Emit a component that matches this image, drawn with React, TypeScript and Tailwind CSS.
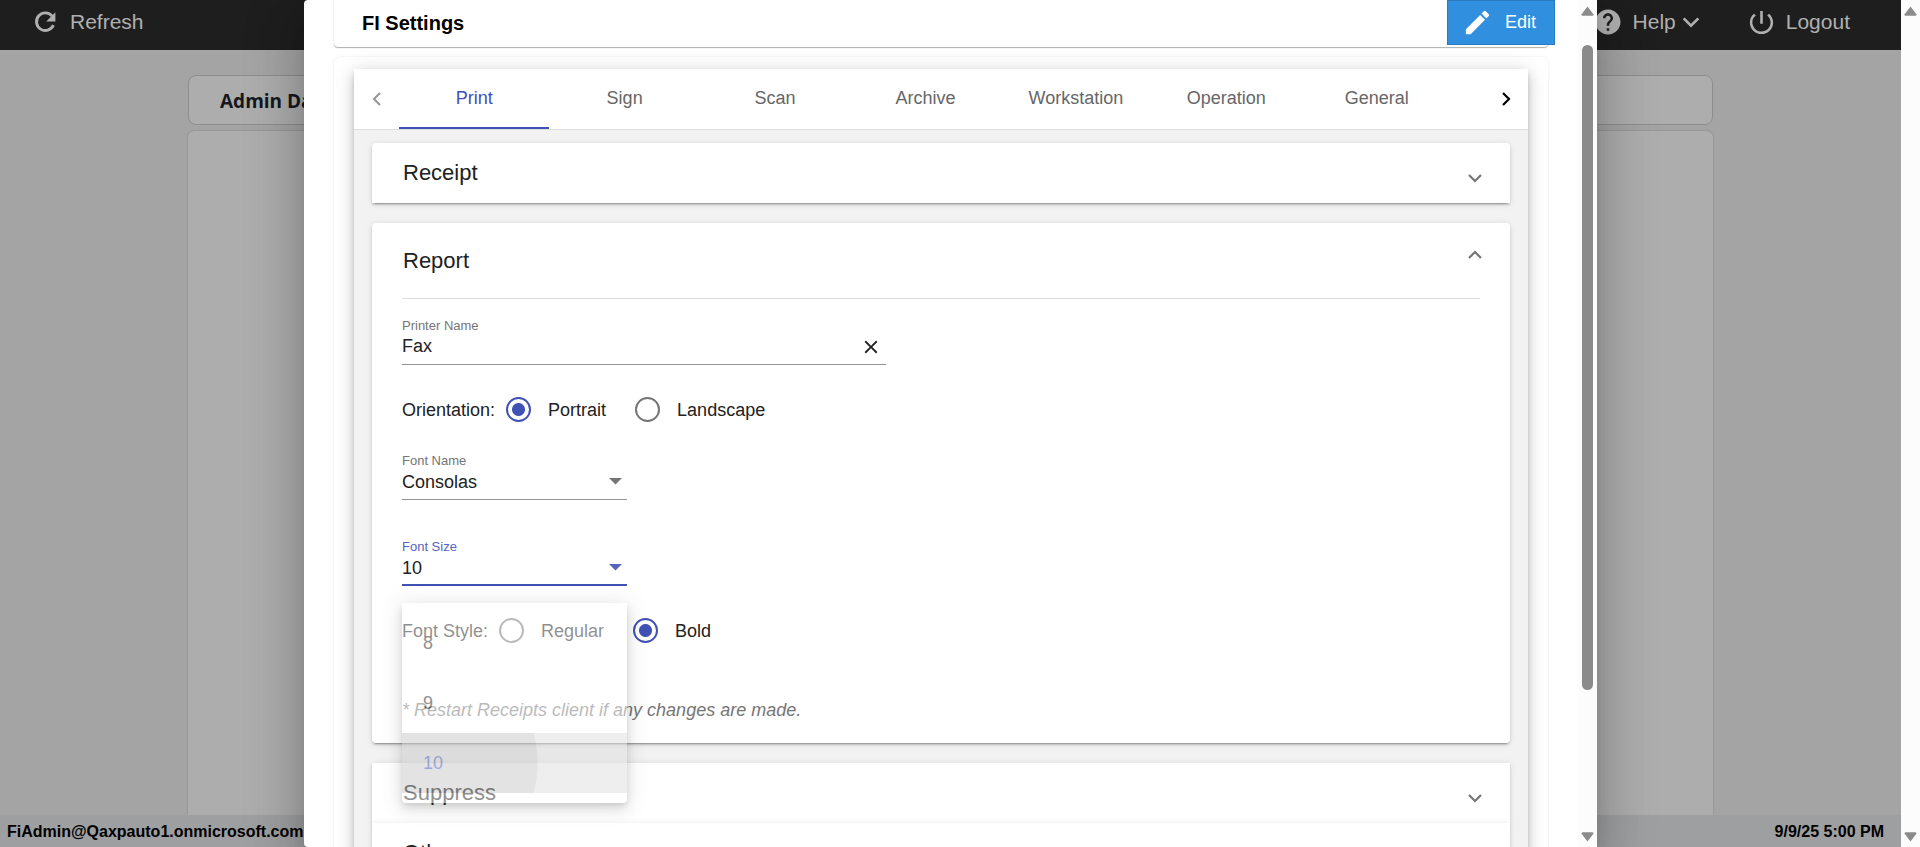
import { useState, type ReactNode } from "react";
import { MdEdit, MdHelp, MdPowerSettingsNew, MdClose } from "react-icons/md";

type ChevronProps = { direction: "up" | "down" | "left" | "right"; className?: string };

const chevronPaths = {
  up: "M3 12 L9 6 L15 12",
  down: "M3 6 L9 12 L15 6",
  left: "M12 3 L6 9 L12 15",
  right: "M6 3 L12 9 L6 15",
};

function Chevron({ direction, className = "size-[18px]" }: ChevronProps) {
  return (
    <svg viewBox="0 0 18 18" fill="none" stroke="currentColor" strokeWidth="2.2" className={className} aria-hidden="true">
      <path d={chevronPaths[direction]} />
    </svg>
  );
}

function RefreshIcon() {
  return (
    <svg viewBox="0 0 28 28" className="size-[28px]" fill="none" aria-hidden="true">
      <path d="M21.2 8.2 A8.8 8.8 0 1 0 22.4 17.2" stroke="currentColor" strokeWidth="2.9" />
      <path d="M24.4 4.2 V13.4 H15.2 Z" fill="currentColor" />
    </svg>
  );
}

function ScrollTrack({ thumb }: { thumb?: boolean }) {
  return (
    <div className="flex w-[19px] shrink-0 flex-col items-center justify-between bg-[#fcfcfc] pt-1.5 pb-[5px] text-[#8b8b8b]" aria-hidden="true">
      <svg viewBox="0 0 13 10" className="h-2.5 w-[13px]"><path d="M6.5 0.5 L12.4 8.2 Q12.8 9.8 11.4 9.8 H1.6 Q0.2 9.8 0.6 8.2 Z" fill="currentColor" /></svg>
      {thumb && (
        <div className="flex w-full flex-1 flex-col items-center pt-[29px]">
          <div className="h-[82%] w-[11px] rounded-full bg-[#8b8b8b]" />
        </div>
      )}
      <svg viewBox="0 0 13 10" className="h-2.5 w-[13px]"><path d="M6.5 9.5 L12.4 1.8 Q12.8 0.2 11.4 0.2 H1.6 Q0.2 0.2 0.6 1.8 Z" fill="currentColor" /></svg>
    </div>
  );
}

const panelShadow =
  "shadow-[0_4px_1px_-3px_rgba(0,0,0,0.2),0_2px_2px_0_rgba(0,0,0,0.14),0_1px_6px_0_rgba(0,0,0,0.12)]";

function CollapsedPanel({ title, className = "" }: { title: string; className?: string }) {
  return (
    <button type="button" className={`flex h-15 w-full items-center justify-between bg-white pr-[26px] pl-[31px] text-left ${panelShadow} ${className}`}>
      <span className="text-[22px] leading-7">{title}</span>
      <Chevron direction="down" className="mt-2.5 size-[18px] text-[#757575]" />
    </button>
  );
}

type RadioProps = { name: string; label: string; checked: boolean; onChange: () => void };

function Radio({ name, label, checked, onChange }: RadioProps) {
  return (
    <label className="flex items-center gap-[17px]">
      <input
        type="radio"
        name={name}
        checked={checked}
        onChange={onChange}
        className="size-[25px] appearance-none rounded-full border-2 border-[#757575] checked:border-[#3f51b5] checked:bg-[radial-gradient(circle,#3f51b5_0_6px,transparent_7px)]"
      />
      <span>{label}</span>
    </label>
  );
}

type SelectProps = { id: string; label: string; options: string[]; value: string; onChange: (v: string) => void; active?: boolean; children?: ReactNode };

function SelectField({ id, label, options, value, onChange, active, children }: SelectProps) {
  return (
    <div className="relative w-[225px]">
      <label htmlFor={id} className={`block text-[13px] leading-4 ${active ? "text-[#5565be]" : "text-[#757575]"}`}>{label}</label>
      <div className={`flex h-[31px] items-start justify-between pt-px ${active ? "border-b-2 border-[#3f51b5]" : "border-b border-[#949494]"}`}>
        <select id={id} value={value} onChange={(e) => onChange(e.target.value)} className="h-6 flex-1 appearance-none bg-transparent leading-6 outline-none">
          {options.map((o) => <option key={o}>{o}</option>)}
        </select>
        <svg viewBox="0 0 13 7" className={`mt-2 mr-[5px] h-[7px] w-[13px] ${active ? "text-[#5565be]" : "text-[#757575]"}`} aria-hidden="true">
          <path d="M0 0 H13 L6.5 6.5 Z" fill="currentColor" />
        </svg>
      </div>
      {children}
    </div>
  );
}

const tabs = ["Print", "Sign", "Scan", "Archive", "Workstation", "Operation", "General"];
const sizes = ["8", "9", "10"];

export default function App() {
  const [tab, setTab] = useState("Print");
  const [printer, setPrinter] = useState("Fax");
  const [orientation, setOrientation] = useState("Portrait");
  const [fontName, setFontName] = useState("Consolas");
  const [fontSize, setFontSize] = useState("10");
  const [fontStyle, setFontStyle] = useState("Bold");

  return (
    <div className="relative flex h-screen overflow-hidden bg-[#a4a4a4] font-['Liberation_Sans',Arial,sans-serif] text-[#212121]">
      <div className="flex min-w-0 flex-1 flex-col">
        <header className="flex h-[50px] shrink-0 items-center justify-between bg-[#1e1e1e] pr-[51px] pb-1.5 pl-[31px] text-[21px] text-[#b0b0b0]">
          <button type="button" className="flex items-center gap-[11px]">
            <RefreshIcon />Refresh
          </button>
          <nav className="flex items-center gap-11">
            <button type="button" className="flex items-center">
              <MdHelp className="mr-2.5 size-[30px]" />Help
              <Chevron direction="down" className="ml-1 size-[22px]" />
            </button>
            <button type="button" className="flex items-center gap-[9px]"><MdPowerSettingsNew className="size-[31px]" />Logout</button>
          </nav>
        </header>
        <main className="flex flex-1 flex-col gap-1.5 pt-[25px] pr-[188px] pl-[188px]">
          <h1 className="flex h-[50px] items-center rounded-lg border border-[#8e8e8e] bg-[#adadad] px-[31px] pt-0.5 font-['Open_Sans',sans-serif] text-[19px] font-bold text-[#15181c]">Admin Dashboard</h1>
          <section className="flex-1 rounded-t-md bg-[#adadad] shadow-[0_0_2px_rgba(0,0,0,0.25)]" />
        </main>
        <footer className="relative flex h-8 shrink-0 items-center justify-between bg-[#9e9fa0] pt-0.5 pr-[17px] pl-[7px] text-base font-bold text-black">
          <span>FiAdmin@Qaxpauto1.onmicrosoft.com</span>
          <time>9/9/25 5:00 PM</time>
        </footer>
      </div>
      <ScrollTrack />

      <div className="absolute inset-y-0 right-[323px] left-[304px] flex rounded bg-white shadow-[0_14px_19px_-9px_rgba(0,0,0,0.2),0_30px_48px_4px_rgba(0,0,0,0.14),0_11px_58px_10px_rgba(0,0,0,0.12)]" role="dialog" aria-labelledby="dialog-title">
        <div className="flex min-w-0 flex-1 flex-col gap-2.5 overflow-hidden pr-[23px] pl-[30px]">
          <div className="mr-[7px] flex h-[47px] shrink-0 items-start justify-between rounded-b shadow-[0_1px_1px_rgba(0,0,0,0.3),0_0_3px_rgba(0,0,0,0.08)]">
            <h2 id="dialog-title" className="pt-[11px] pl-7 text-xl leading-6 font-bold text-black">FI Settings</h2>
            <button type="button" className="-mr-[7px] flex h-[45px] w-[108px] items-center gap-3 border border-[#2a7ac0] bg-[#308fde] pl-3.5 text-lg text-white">
              <MdEdit className="size-[31px]" />
              <span className="pb-0.5">Edit</span>
            </button>
          </div>

          <div className="mr-[7px] rounded-md px-5 pt-3 shadow-[0_0_3px_rgba(0,0,0,0.1)]">
            <div className="bg-[#f2f2f2] shadow-[0_3px_5px_-1px_rgba(0,0,0,0.2),0_6px_12px_0_rgba(0,0,0,0.14),0_1px_20px_0_rgba(0,0,0,0.12)]">
              <div className="flex h-[61px] border-b border-[#dedede] bg-white">
                <button type="button" aria-label="Previous tabs" className="flex w-[45px] items-center justify-center text-[#999]"><Chevron direction="left" /></button>
                <div role="tablist" className="flex flex-1 pr-[31px]">
                  {tabs.map((t) => (
                    <button
                      key={t}
                      type="button"
                      role="tab"
                      aria-selected={tab === t}
                      onClick={() => setTab(t)}
                      className={`flex-1 basis-0 border-b-2 text-[18px] ${tab === t ? "border-[#3f51b5] text-[#3f51b5]" : "border-transparent text-[#666]"}`}
                    >
                      {t}
                    </button>
                  ))}
                </div>
                <button type="button" aria-label="Next tabs" className="flex w-[45px] items-center justify-center text-black"><Chevron direction="right" /></button>
              </div>

              <div className="flex flex-col gap-5 px-[18px] pt-[13px]">
                <CollapsedPanel title="Receipt" className="rounded-t" />

                <section className={`h-[520px] rounded bg-white px-[30px] text-lg leading-6 ${panelShadow}`}>
                  <button type="button" className="flex h-[76px] w-full items-center justify-between border-b border-[#dedede] pl-px text-left">
                    <span className="text-[22px] leading-7">Report</span>
                    <Chevron direction="up" className="-mr-1 mb-3 size-[18px] text-[#757575]" />
                  </button>
                  <div className="pt-[19px]">
                    <label htmlFor="printer" className="block text-[13px] leading-4 text-[#757575]">Printer Name</label>
                    <div className="flex h-[31px] w-[484px] items-start border-b border-[#949494]">
                      <input id="printer" value={printer} onChange={(e) => setPrinter(e.target.value)} className="h-6 min-w-0 flex-1 outline-none" />
                      <button type="button" aria-label="Clear" onClick={() => setPrinter("")} className="mt-0.5 mr-1"><MdClose className="size-[22px]" /></button>
                    </div>
                  </div>
                  <fieldset className="mt-8 flex items-center gap-[29px]">
                    <div className="flex items-center gap-[11px]">
                      <span>Orientation:</span>
                      <Radio name="orientation" label="Portrait" checked={orientation === "Portrait"} onChange={() => setOrientation("Portrait")} />
                    </div>
                    <Radio name="orientation" label="Landscape" checked={orientation === "Landscape"} onChange={() => setOrientation("Landscape")} />
                  </fieldset>
                  <div className="mt-[31px] flex flex-col gap-[39px]">
                    <SelectField id="font-name" label="Font Name" options={["Consolas"]} value={fontName} onChange={setFontName} />
                    <SelectField id="font-size" label="Font Size" options={sizes} value={fontSize} onChange={setFontSize} active>
                      <ul role="listbox" aria-label="Font Size" className="absolute top-16 left-0 z-10 w-full rounded-b bg-white pt-2.5 pb-2.5 opacity-50 shadow-[0_3px_5px_-1px_rgba(0,0,0,0.2),0_6px_12px_0_rgba(0,0,0,0.2),0_2px_20px_2px_rgba(0,0,0,0.16)]">
                        {sizes.map((s) => (
                          <li
                            key={s}
                            role="option"
                            aria-selected={s === fontSize}
                            className={`flex h-15 items-center pl-[21px] ${s === fontSize ? "bg-[#dedede] bg-[radial-gradient(circle_at_21px_30px,#c8c8c8_0_114px,transparent_115px)] text-[#3f51b5]" : ""}`}
                          >
                            {s}
                          </li>
                        ))}
                      </ul>
                    </SelectField>
                  </div>
                  <fieldset className="mt-8 flex items-center gap-[29px]">
                    <div className="flex items-center gap-[11px]">
                      <span>Font Style:</span>
                      <Radio name="font-style" label="Regular" checked={fontStyle === "Regular"} onChange={() => setFontStyle("Regular")} />
                    </div>
                    <Radio name="font-style" label="Bold" checked={fontStyle === "Bold"} onChange={() => setFontStyle("Bold")} />
                  </fieldset>
                  <p className="mt-[55px] text-[#757575] italic">* Restart Receipts client if any changes are made.</p>
                </section>

                <div>
                  <CollapsedPanel title="Suppress" />
                  <CollapsedPanel title="Other" />
                </div>
              </div>
            </div>
          </div>
        </div>
        <ScrollTrack thumb />
      </div>
    </div>
  );
}
